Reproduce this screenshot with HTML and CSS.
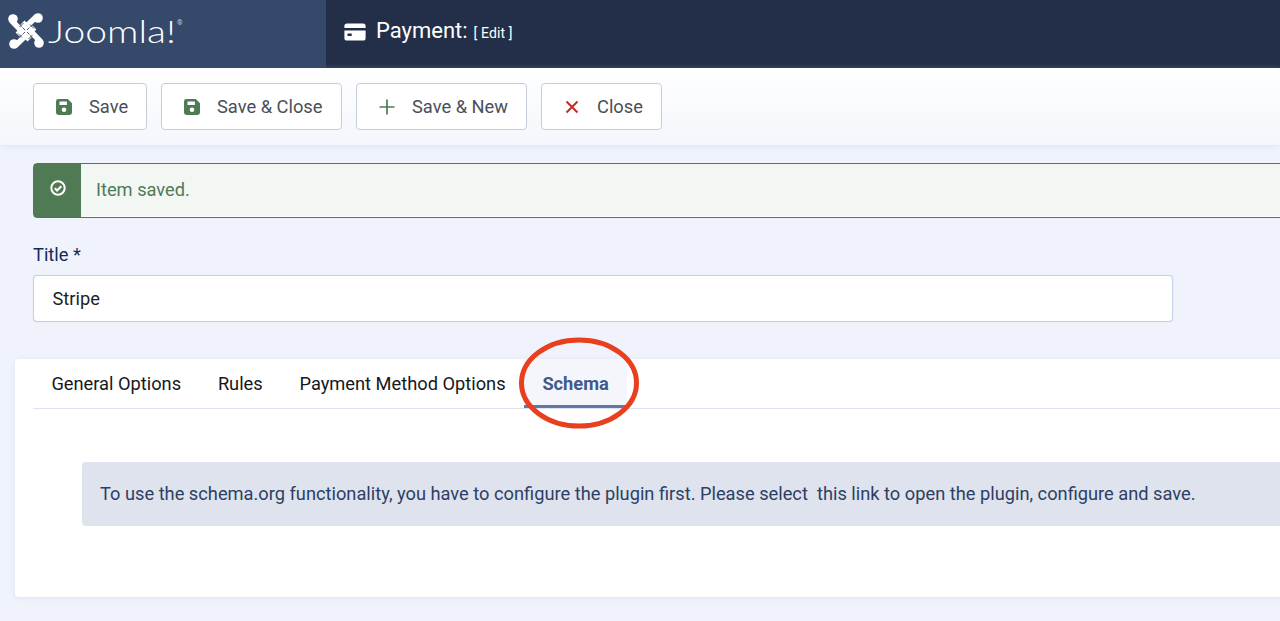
FILE: index.html
```html
<!DOCTYPE html>
<html lang="en">
<head>
<meta charset="utf-8">
<title>Payment: [ Edit ]</title>
<link rel="stylesheet" href="styles.css">
</head>
<body>
<header class="topbar">
  <div class="brand">
    <svg class="brand-mark" viewBox="0 0 36 36" aria-hidden="true">
      <g fill="#fff">
        <circle cx="5" cy="6" r="4.800"/>
        <circle cx="30" cy="5" r="4.800"/>
        <circle cx="31" cy="30" r="4.800"/>
        <circle cx="6" cy="31" r="4.800"/>
      </g>
      <g fill="none" stroke="#fff" stroke-width="5.600" stroke-linejoin="miter">
        <path d="M4 8L18 22.500L26.500 14.500"/>
        <path d="M28 4L13.500 18L21.500 26.500"/>
        <path d="M32 28L18 13.500L9.500 21.500"/>
        <path d="M8 32L22.500 18L14.500 9.500"/>
      </g>
      <g fill="none" stroke="#35496a" stroke-width="0.900">
        <path d="M11.500 14L15.500 10"/>
        <path d="M22 11.500L26 15.500"/>
        <path d="M24.500 22L20.500 26"/>
        <path d="M14 24.500L10 20.500"/>
        <path d="M14.500 14.500L17 17"/>
        <path d="M21.500 14.500L19 17"/>
        <path d="M21.500 21.500L19 19"/>
        <path d="M14.500 21.500L17 19"/>
      </g>
    </svg>
    <span class="brand-name">Joomla!</span><span class="brand-reg">®</span>
  </div>
  <div class="page-title">
    <svg class="title-icon" viewBox="0 0 22 18" aria-hidden="true">
      <path fill="#fff" d="M3 0.5h16a2.6 2.6 0 0 1 2.6 2.6V5H0.4V3.1A2.6 2.6 0 0 1 3 0.5zM0.4 7.6h21.2v7.3a2.6 2.6 0 0 1-2.6 2.6H3a2.6 2.6 0 0 1-2.6-2.6zM3.5 10.5v2.6h4.2v-2.6z"/>
    </svg>
    <h1 class="title-text">Payment:<small class="title-sub">[ Edit ]</small></h1>
  </div>
</header>

<nav class="toolbar">
  <button class="btn btn-save" type="button">
    <svg class="btn-icon" viewBox="0 0 16 16" aria-hidden="true"><path fill="#4f7a54" d="M2.4 0h9.4L16 4.2v9.4A2.4 2.4 0 0 1 13.600 16H2.400A2.400 2.400 0 0 1 0 13.600V2.400A2.400 2.400 0 0 1 2.400 0zM3.500 2.600v3.300h7.400V2.600zM8 8.400a2.300 2.300 0 1 0 0 4.600a2.300 2.300 0 0 0 0-4.600z"/></svg>
    <span>Save</span>
  </button>
  <button class="btn btn-saveclose" type="button">
    <svg class="btn-icon" viewBox="0 0 16 16" aria-hidden="true"><path fill="#4f7a54" d="M2.4 0h9.4L16 4.2v9.4A2.4 2.4 0 0 1 13.600 16H2.400A2.400 2.400 0 0 1 0 13.600V2.400A2.400 2.400 0 0 1 2.400 0zM3.500 2.600v3.300h7.400V2.600zM8 8.400a2.300 2.300 0 1 0 0 4.600a2.300 2.300 0 0 0 0-4.600z"/></svg>
    <span>Save &amp; Close</span>
  </button>
  <button class="btn btn-savenew" type="button">
    <svg class="btn-icon" viewBox="0 0 16 16" aria-hidden="true"><path fill="none" stroke="#4f7a54" stroke-width="1.700" d="M8 0.500v15M0.500 8h15"/></svg>
    <span>Save &amp; New</span>
  </button>
  <button class="btn btn-close" type="button">
    <svg class="btn-icon btn-icon-x" viewBox="0 0 14 14" aria-hidden="true"><path fill="none" stroke="#c0302b" stroke-width="2.100" d="M1.500 1.500l11 11M12.500 1.500l-11 11"/></svg>
    <span>Close</span>
  </button>
</nav>

<main class="content">
  <div class="alert">
    <div class="alert-icon">
      <svg viewBox="0 0 16 16" width="16" height="16" aria-hidden="true">
        <circle cx="8" cy="8" r="6.700" fill="none" stroke="#fff" stroke-width="2"/>
        <path d="M4.800 8.200l2.300 2.300 4.200-4.300" fill="none" stroke="#fff" stroke-width="2.200"/>
      </svg>
    </div>
    <div class="alert-text">Item saved.</div>
  </div>

  <label class="field-label" for="title">Title *</label>
  <input class="field-input" id="title" type="text" value="Stripe">

  <section class="card">
    <ul class="tabs">
      <li class="tab">General Options</li>
      <li class="tab">Rules</li>
      <li class="tab">Payment Method Options</li>
      <li class="tab tab-active">Schema</li>
    </ul>
    <div class="tab-panel">
      <div class="info">To use the schema.org functionality, you have to configure the plugin first. Please select&nbsp; this link to open the plugin, configure and save.</div>
    </div>
  </section>
</main>

<svg class="annotation" viewBox="0 0 124 96" aria-hidden="true">
  <ellipse cx="62" cy="47" rx="57.500" ry="43" fill="none" stroke="#e8401f" stroke-width="5"/>
</svg>
</body>
</html>
```

FILE: styles.css
```css
* { box-sizing: border-box; }

html, body {
  margin: 0;
  height: 100%;
  overflow: hidden;
}

body {
  position: relative;
  background: #f0f3fb;
  font-family: Roboto, "Liberation Sans", sans-serif;
  color: #1c1f24;
}

.topbar {
  display: flex;
  height: 68px;
  background: #232f48;
}

.brand {
  display: flex;
  align-items: center;
  width: 326px;
  height: 100%;
  padding: 0 0 6px 8px;
  background: #35496a;
  color: #fff;
}

.brand-mark {
  width: 36px;
  height: 36px;
  flex: none;
}

.brand-name {
  width: 129px;
  margin-left: 4px;
  font-family: Lato, sans-serif;
  font-weight: 300;
  font-size: 32px;
  line-height: 36px;
  transform: scaleX(1.22);
  transform-origin: left center;
}

.brand-reg {
  align-self: flex-start;
  margin-top: 19px;
  font-size: 7px;
  line-height: 8px;
  color: #c5cedd;
}

.page-title {
  display: flex;
  align-items: center;
  padding: 0 0 5px 18px;
}

.title-icon {
  width: 22px;
  height: 18px;
  flex: none;
}

.title-text {
  margin: 0 0 0 10px;
  font-size: 22px;
  font-weight: 400;
  line-height: 28px;
  color: #fff;
}

.title-sub {
  margin-left: 6px;
  font-size: 14px;
  font-weight: 400;
  letter-spacing: 0.1px;
}

.toolbar {
  display: flex;
  gap: 14px;
  height: 77px;
  padding: 15px 33px;
  background: linear-gradient(#fff, #f3f6fb);
  box-shadow: 0 1px 6px rgba(190, 200, 225, 0.35);
}

.btn {
  display: flex;
  align-items: center;
  height: 47px;
  padding: 0 22px;
  background: #fff;
  border: 1px solid #c6cdd9;
  border-radius: 4px;
  font: 400 18.300px/24px Roboto, sans-serif;
  color: #495057;
  white-space: nowrap;
}

.btn-save { width: 114px; }
.btn-saveclose { width: 181px; }
.btn-savenew { width: 171px; }
.btn-close { width: 121px; }

.btn-icon {
  width: 16px;
  height: 16px;
  flex: none;
  margin-right: 17px;
}

.btn-icon-x {
  width: 14px;
  height: 14px;
  margin-left: 1px;
  margin-right: 18px;
}

.content {
  padding: 18px 0 0 33px;
}

.alert {
  display: flex;
  width: 1300px;
  height: 55px;
  border: 1px solid #4f7a54;
  border-radius: 4px 0 0 4px;
  background: #f3f7f4;
  box-shadow: inset 0 -1px 0 #fff;
}

.alert-icon {
  display: flex;
  justify-content: center;
  padding-top: 16px;
  width: 47px;
  flex: none;
  background: #4f7a54;
}

.alert-text {
  padding: 15px 0 0 15px;
  font-size: 18.250px;
  line-height: 22px;
  color: #4f7a54;
}

.field-label {
  display: block;
  margin-top: 26px;
  font-size: 18.250px;
  line-height: 22px;
  color: #132a5a;
}

.field-input {
  display: block;
  width: 1140px;
  height: 47px;
  margin-top: 9px;
  padding: 0 18.500px;
  background: #fff;
  border: 1px solid #c5cfe6;
  border-radius: 4px;
  box-shadow: 0 0 1px #c5cfe6;
  font: 400 18.250px Roboto, sans-serif;
  color: #1c1f24;
}

.card {
  width: 1300px;
  height: 238px;
  margin: 37px 0 0 -18px;
  padding: 0 0 0 18px;
  background: #fff;
  border-radius: 4px 0 0 4px;
  box-shadow: 0 1px 5px rgba(190, 200, 225, 0.4);
}

.tabs {
  display: flex;
  height: 50px;
  margin: 0;
  padding: 0;
  list-style: none;
  border-bottom: 1px solid #dde3f1;
}

.tab {
  padding: 0 18.400px;
  font-size: 18.250px;
  line-height: 49px;
  color: #15181c;
}

.tab-active {
  font-weight: 700;
  color: #41598b;
  background: #f4f6fb;
  border-bottom: 3px solid #6079a6;
  height: 49px;
}

.tab-panel {
  padding: 53px 0 0 49px;
}

.info {
  height: 64px;
  padding: 0 18px;
  background: #dee3ee;
  border-radius: 4px 0 0 4px;
  font-size: 18.250px;
  line-height: 63px;
  color: #2d3f63;
  white-space: nowrap;
}

.annotation {
  position: absolute;
  left: 517px;
  top: 336px;
  width: 124px;
  height: 96px;
}
```
